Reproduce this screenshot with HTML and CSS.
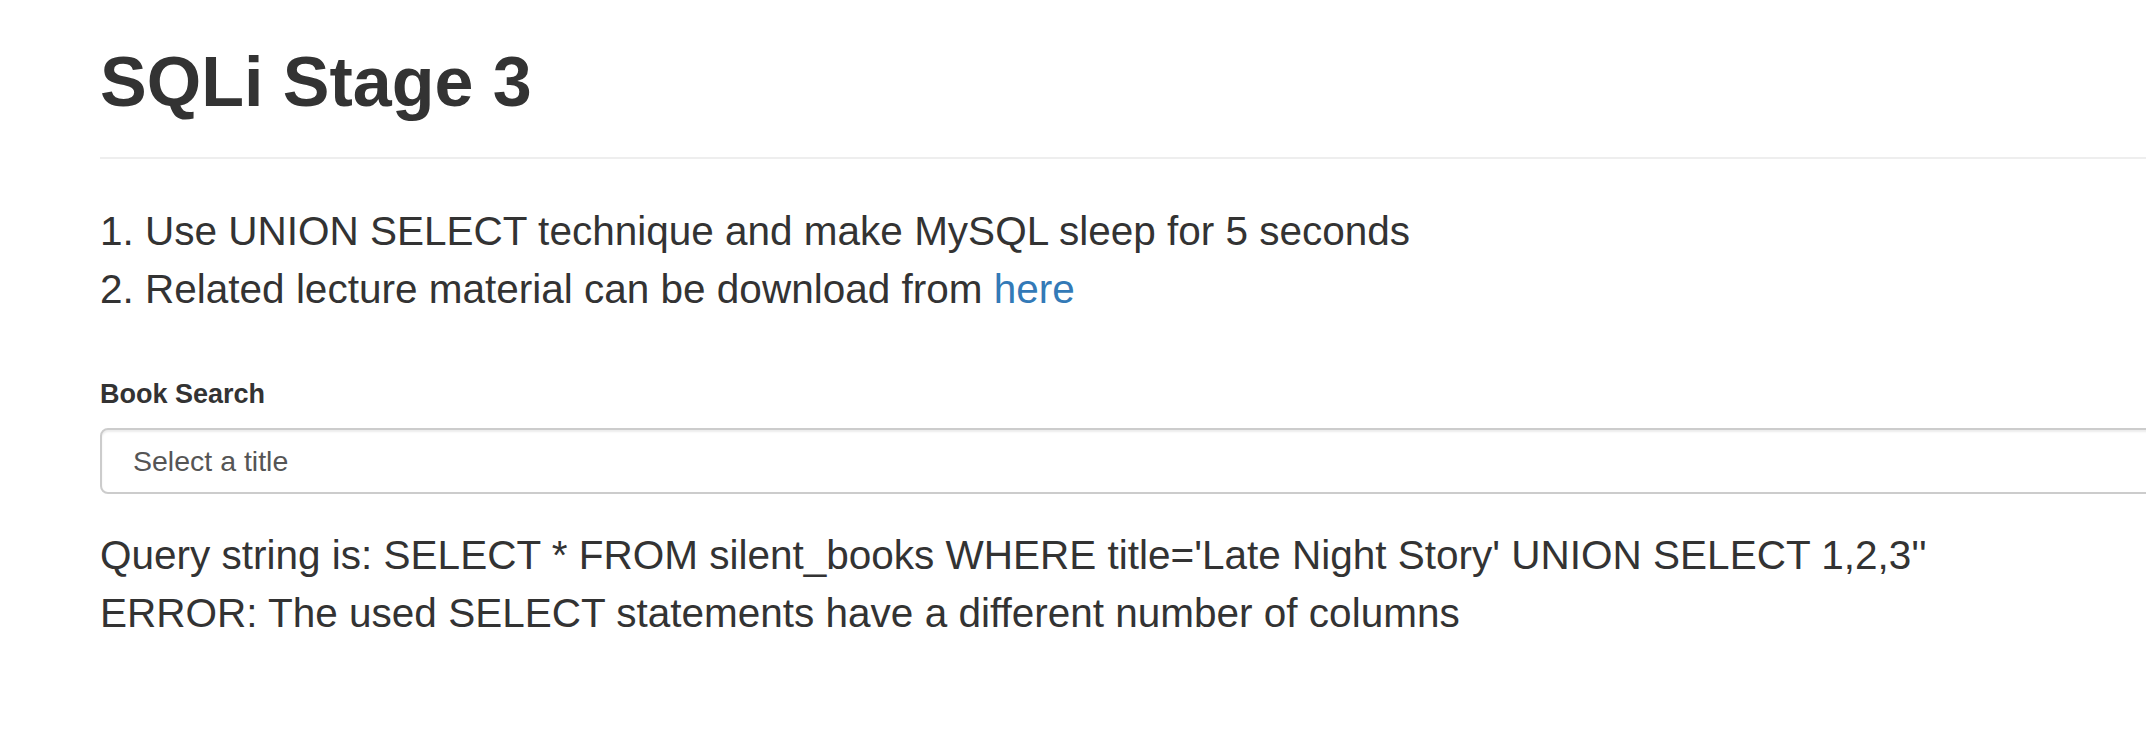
FILE: index.html
```html
<!DOCTYPE html>
<html lang="en">
<head>
<meta charset="utf-8">
<title>SQLi Stage 3</title>
<link rel="stylesheet" href="styles.css">
</head>
<body>
<div class="container">
  <div class="page-header">
    <h1 class="title">SQLi Stage 3</h1>
  </div>
  <div class="instructions">
    <div>1. Use UNION SELECT technique and make MySQL sleep for 5 seconds</div>
    <div>2. Related lecture material can be download from <a class="link" href="#">here</a></div>
  </div>
  <form class="form-group">
    <label class="label" for="book">Book Search</label>
    <select class="form-control" id="book">
      <option>Select a title</option>
    </select>
  </form>
  <div class="result">
    <div>Query string is: SELECT * FROM silent_books WHERE title='Late Night Story' UNION SELECT 1,2,3''</div>
    <div>ERROR: The used SELECT statements have a different number of columns</div>
  </div>
</div>
</body>
</html>
```
FILE: styles.css
```css
html, body {
  margin: 0;
  padding: 0;
  background: #fff;
  overflow: hidden;
}
body {
  font-family: "Liberation Sans", Arial, Helvetica, sans-serif;
  color: #333;
  font-size: 28px;
  line-height: 1.42857;
}
.container {
  margin: 0 -300px 0 100px;
}
.page-header {
  padding-bottom: 36px;
  border-bottom: 2px solid #eee;
}
.title {
  margin: 44px 0 0 0;
  font-size: 70px;
  line-height: 77px;
  font-weight: 700;
  color: #333;
}
.instructions {
  margin-top: 43px;
  font-size: 40.5px;
  line-height: 58px;
}
.link {
  color: #337ab7;
  text-decoration: none;
}
.form-group {
  margin: 56px 0 0 0;
  display: flex;
  flex-direction: column;
}
.label {
  font-weight: 700;
  font-size: 27px;
  line-height: 40px;
  margin-bottom: 14px;
}
.form-control {
  appearance: none;
  -webkit-appearance: none;
  height: 66px;
  width: 100%;
  box-sizing: border-box;
  border: 2px solid #ccc;
  border-radius: 8px;
  box-shadow: inset 0 2px 2px rgba(0,0,0,.075);
  background: #fff;
  color: #555;
  font-family: "Liberation Sans", Arial, Helvetica, sans-serif;
  font-size: 28.5px;
  padding: 0 0 0 31px;
}
.result {
  margin-top: 32px;
  font-size: 40.5px;
  line-height: 58px;
}
```
